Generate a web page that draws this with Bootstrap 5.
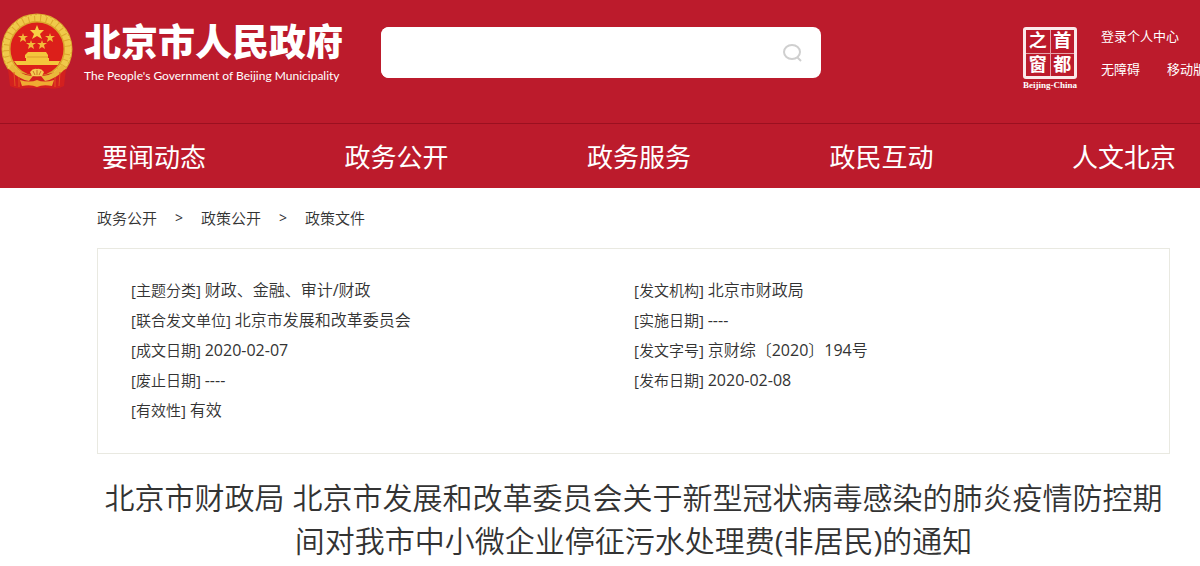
<!DOCTYPE html>
<html lang="zh-CN">
<head>
<meta charset="utf-8">
<meta name="viewport" content="width=device-width, initial-scale=1">
<title>北京市人民政府</title>
<link href="https://cdn.jsdelivr.net/npm/bootstrap@5.3.0/dist/css/bootstrap.min.css" rel="stylesheet">
<style>
  body { font-family: "Open Sans", "Noto Sans CJK SC", sans-serif; color: #333; font-size: 15px; overflow-x: hidden; }
  a { color: inherit; text-decoration: none; }
  .site-head { background: #bc1b2c; color: #fff; }
  .head-top { height: 123px; overflow: hidden; }
  .brand-box { width: 381px; padding-top: 13px; gap: 10px; }
  .brand-words { padding-top: 7px; white-space: nowrap; }
  .brand-zh { font-size: 37px; line-height: 44px; font-weight: 900; }
  .brand-en { font-family: Lato, "Open Sans", sans-serif; font-size: 12px; line-height: 24px; }
  .search-box { flex: 0 1 440px; height: 51px; margin-top: 27px; border-radius: 8px; overflow: hidden; }
  .search-box .form-control { font-size: 16px; padding-left: 16px; }
  .search-box .btn { padding: 0 18px; line-height: 1; }
  .head-side { padding-top: 27px; gap: 22px; width: 179px; }
  .seal { width: 58px; font-family: "Liberation Serif", "Noto Sans CJK SC", serif; }
  .seal-grid { display: grid; grid-template-columns: 1fr 1fr; width: 54px; height: 52px; border: 3px solid #fbe9ea; border-radius: 3px; gap: 1px; background: #e5a3a9; }
  .seal-grid span { background: #bc1b2c; font-size: 18px; line-height: 22px; font-weight: 700; text-align: center; }
  .seal-name { font-size: 9px; line-height: 12px; font-weight: 700; white-space: nowrap; }
  .side-links { font-size: 13px; line-height: 18px; white-space: nowrap; gap: 15px; }
  .side-row { gap: 27px; }
  .main-nav { border-top: 1px solid #9b1020; height: 65px; padding: 2px 24px 0 102px; font-size: 26px; white-space: nowrap; }
  .main-body { padding: 0 30px 0 97px; }
  .crumbs { height: 60px; }
  .crumbs .breadcrumb-item + .breadcrumb-item { padding-left: 18px; }
  .crumbs .breadcrumb-item + .breadcrumb-item::before { color: #333; padding-right: 18px; font-size: 14px; content: ">"; }
  .info-box { border: 1px solid #e9e9e1; padding: 26px 32px 28px 33px; }
  .info-box li { line-height: 30px; }
  .info-box li span { font-size: 16px; }
  .doc-title { font-size: 30px; line-height: 43px; font-weight: 400; margin: 22px 0 0; }
  .info-box, .crumbs, .doc-title { font-family: "Open Sans", "Noto Sans CJK SC DemiLight", "Noto Sans CJK SC", sans-serif; }
</style>
</head>
<body>
<header class="site-head">
  <div class="head-top d-flex align-items-start">
    <a href="#" class="brand-box d-flex flex-shrink-0">
      <svg width="74" height="78" viewBox="0 0 74 78" aria-hidden="true">
        <path d="M10 52 L10 73 Q18 77 27 75 H48 Q57 77 64 73 L64 52Z" fill="#d3201f"/>
        <circle cx="37" cy="36" r="31" fill="#dc1f1a"/>
        <circle cx="37" cy="36" r="31" fill="none" stroke="#dca72d" stroke-width="9"/>
        <circle cx="37" cy="36" r="31" fill="none" stroke="#f0c94a" stroke-width="6" stroke-dasharray="5 1"/>
        <circle cx="37" cy="36" r="34" fill="none" stroke="#f3d45c" stroke-width="1" stroke-dasharray="3 2"/>
        <path d="M8 56 Q22 60 30 62 Q37 65 44 62 Q52 60 66 56 L64 73 Q50 70 37 71 Q24 70 10 73Z" fill="#d3201f"/>
        <path d="M12 51 Q22 64 33 63 L29 68 Q18 66 9 56Z" fill="#e9b83b"/>
        <path d="M62 51 Q52 64 41 63 L45 68 Q56 66 65 56Z" fill="#e9b83b"/>
        <path d="M37 12 L39 17 L44 17 L40 21 L42 26 L37 23 L32 26 L34 21 L30 17 L35 17Z" fill="#f7cf45"/>
        <g fill="#f2bc3a">
          <path d="M23 20l1 3 4 0-3 2 1 4-3-2-3 2 1-4-3-2 4 0Z"/>
          <path d="M50 20l1 3 4 0-3 2 1 4-3-2-3 2 1-4-3-2 4 0Z"/>
          <path d="M31 27l1 3 4 0-3 2 1 4-3-2-3 2 1-4-3-2 4 0Z"/>
          <path d="M42 27l1 3 4 0-3 2 1 4-3-2-3 2 1-4-3-2 4 0Z"/>
        </g>
        <path d="M28 39H46L48 42V45H49V48H60L58 52H17L14 48H26V45H25V42Z" fill="#f4c63c"/>
        <path d="M27 44H48" stroke="#dc9c2b"/>
        <path d="M30 59Q33 55 37 56Q41 55 44 59L42 63H32Z" fill="#f5cb52"/>
        <path d="M33 58l2 4M37 57v5M41 58l-2 4" stroke="#c97524"/>
        <path d="M20 67Q30 70 37 67Q44 70 54 67L52 73Q43 71 37 74Q31 71 22 73Z" fill="#efac32"/>
        <path d="M14 59l1 14M60 59l-1 14M19 64v10M55 64v10" stroke="#e4551f" fill="none"/>
      </svg>
      <div class="brand-words">
        <div class="brand-zh">北京市人民政府</div>
        <div class="brand-en">The People's Government of Beijing Municipality</div>
      </div>
    </a>
    <form class="search-box d-flex bg-white" role="search">
      <input class="form-control border-0 shadow-none bg-white" type="text" aria-label="搜索">
      <button class="btn border-0" type="button" aria-label="搜索">
        <svg width="20" height="20" viewBox="0 0 20 20" fill="none" stroke="#cfcfcf" stroke-width="2"><ellipse cx="9" cy="9" rx="8" ry="7"/><path d="M14 14l4 4"/></svg>
      </button>
    </form>
    <div class="head-side d-flex ms-auto flex-shrink-0">
      <a href="#" class="seal flex-shrink-0">
        <span class="seal-grid mx-auto"><span>之</span><span>首</span><span>窗</span><span>都</span></span>
        <span class="seal-name d-block text-center">Beijing-China</span>
      </a>
      <div class="side-links d-flex flex-column">
        <a href="#">登录个人中心</a>
        <div class="side-row d-flex"><a href="#">无障碍</a><a href="#">移动版</a></div>
      </div>
    </div>
  </div>
  <nav class="main-nav d-flex justify-content-between align-items-center" aria-label="主导航">
    <a href="#">要闻动态</a><a href="#">政务公开</a><a href="#">政务服务</a><a href="#">政民互动</a><a href="#">人文北京</a>
  </nav>
</header>
<main class="main-body">
  <nav class="crumbs d-flex align-items-center" aria-label="breadcrumb">
    <ol class="breadcrumb mb-0">
      <li class="breadcrumb-item"><a href="#">政务公开</a></li>
      <li class="breadcrumb-item"><a href="#">政策公开</a></li>
      <li class="breadcrumb-item"><a href="#">政策文件</a></li>
    </ol>
  </nav>
  <section class="info-box">
    <div class="row g-0">
      <ul class="col-6 list-unstyled mb-0">
        <li>[主题分类] <span>财政、金融、审计/财政</span></li>
        <li>[联合发文单位] <span>北京市发展和改革委员会</span></li>
        <li>[成文日期] <span>2020-02-07</span></li>
        <li>[废止日期] <span>----</span></li>
        <li>[有效性] <span>有效</span></li>
      </ul>
      <ul class="col-6 list-unstyled mb-0">
        <li>[发文机构] <span>北京市财政局</span></li>
        <li>[实施日期] <span>----</span></li>
        <li>[发文字号] <span>京财综〔2020〕194号</span></li>
        <li>[发布日期] <span>2020-02-08</span></li>
      </ul>
    </div>
  </section>
  <h1 class="doc-title text-center">北京市财政局 北京市发展和改革委员会关于新型冠状病毒感染的肺炎疫情防控期间对我市中小微企业停征污水处理费(非居民)的通知</h1>
</main>
<script src="https://cdn.jsdelivr.net/npm/bootstrap@5.3.0/dist/js/bootstrap.bundle.min.js"></script>
</body>
</html>
